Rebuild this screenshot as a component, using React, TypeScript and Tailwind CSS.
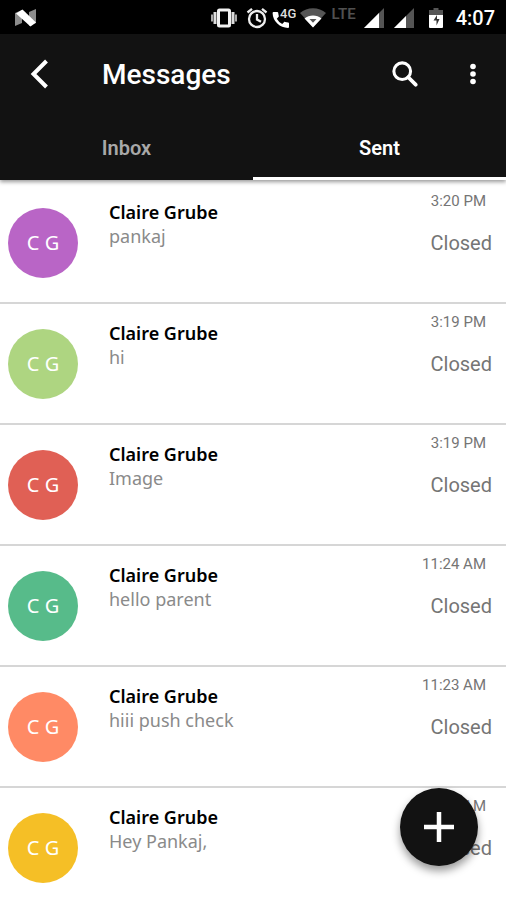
import React, { useState } from 'react';

const messages = [
  { id: 1, name: 'Claire Grube', initials: 'C G', text: 'pankaj', time: '3:20 PM', status: 'Closed', color: 'bg-[#b965c6]' },
  { id: 2, name: 'Claire Grube', initials: 'C G', text: 'hi', time: '3:19 PM', status: 'Closed', color: 'bg-[#aed581]' },
  { id: 3, name: 'Claire Grube', initials: 'C G', text: 'Image', time: '3:19 PM', status: 'Closed', color: 'bg-[#e06055]' },
  { id: 4, name: 'Claire Grube', initials: 'C G', text: 'hello parent', time: '11:24 AM', status: 'Closed', color: 'bg-[#57bb8a]' },
  { id: 5, name: 'Claire Grube', initials: 'C G', text: 'hiii push check', time: '11:23 AM', status: 'Closed', color: 'bg-[#ff8a65]' },
  { id: 6, name: 'Claire Grube', initials: 'C G', text: 'Hey Pankaj,', time: '11:22 AM', status: 'Closed', color: 'bg-[#f5bf26]' },
];

const tabs = ['Inbox', 'Sent'];

const StatusBar: React.FC = () => (
  <div className="flex h-[34px] shrink-0 items-center bg-black pl-[15px] pr-[11px] pt-px text-white">
    <svg width="22" height="18" viewBox="0 0 22 18" className="mr-auto" aria-hidden="true">
      <path d="M0 4l7-3v13l-7 3zM14 3l7-3v14l-7 3z" fill="#8c8c8c" />
      <path d="M1 4.500L7.500 .5 21 13.500l-5.500 4z" fill="#fff" />
    </svg>

    {/* Vibrate */}
    <svg width="28" height="22" viewBox="0 0 28 22" className="mr-2" aria-hidden="true">
      <rect x="8.500" y="3" width="11" height="16" rx="1" fill="none" stroke="#f2f2f2" strokeWidth="3" />
      <path d="M5 5v12M23 5v12" stroke="#ddd" strokeWidth="3" />
      <path d="M2 7.500v7M26 7.500v7" stroke="#aaa" strokeWidth="2" />
    </svg>
    {/* Alarm */}
    <svg width="22" height="22" viewBox="0 0 22 22" className="mr-1" fill="none" stroke="#eee" aria-hidden="true">
      <circle cx="11" cy="12" r="8" strokeWidth="2.300" />
      <path d="M1.500 5.500L6 1.800M20.500 5.500L16 1.800M11 7v5.500l4 2.300" strokeWidth="2.300" />
    </svg>
    {/* Call over 4G */}
    <svg width="24" height="22" viewBox="0 0 24 22" className="mr-1" aria-hidden="true">
      <path d="M1.500 5h3.800c.5 0 .8.300.9.800.1 1.100.3 2.100.6 3.100.1.300 0 .7-.2.900l-1.800 2a12 12 0 0 0 5.400 5.200l2-1.900c.2-.2.600-.3.900-.2 1 .3 2 .5 3 .5.600 0 .9.400.9.900v3.700c0 .5-.4.900-.9.900A15.500 15.500 0 0 1 .6 5.900c0-.5.4-.9.9-.9z" fill="#fff" />
      <text x="8" y="11" fill="#ddd" fontFamily="Roboto, sans-serif" fontSize="13" fontWeight="500">4G</text>
    </svg>
    {/* Wifi */}
    <svg width="26" height="20" viewBox="0 0 26 20" className="mr-1.5" aria-hidden="true">
      <path d="M13 19L0 5C7-1.500 19-1.500 26 5z" fill="#555" />
      <path d="M13 19.500L4.500 10.500C9 6.500 17 6.500 21.500 10.500z" fill="#fff" />
      <path d="M9.500 11h7L13 14.800z" fill="#555" />
    </svg>
    <span className="mr-2 h-6 font-[Roboto,sans-serif] text-[15px] leading-4 font-semibold text-[#505050]">LTE</span>
    {/* Signal strength of both SIMs */}
    <svg width="20" height="20" viewBox="0 0 20 20" className="mr-[10px]" aria-hidden="true">
      <path d="M0 20L20 0v20z" fill="#555" />
      <path d="M0 20L15 5v15z" fill="#fff" />
    </svg>
    <svg width="20" height="20" viewBox="0 0 20 20" className="mr-[15px]" aria-hidden="true">
      <path d="M0 20L20 0v20z" fill="#555" />
      <path d="M0 20L12 8v12z" fill="#fff" />
    </svg>
    {/* Battery */}
    <svg width="14" height="22" viewBox="0 0 14 22" className="mr-[13px]" aria-hidden="true">
      <path d="M4.500 1h5v2H14v5H0V3h4.500z" fill="#555" />
      <path d="M0 8h14v12a1 1 0 0 1-1 1H1a1 1 0 0 1-1-1z" fill="#fff" />
      <path d="M8 8L4.500 13.500h3v5l3-6.500H8z" fill="#333" />
    </svg>
    <span className="font-[Roboto,sans-serif] text-xl leading-6 font-medium">4:07</span>
  </div>
);

const App: React.FC = () => {
  const [active, setActive] = useState('Sent');

  return (
    <div className="flex h-screen flex-col overflow-hidden bg-white">
      <StatusBar />

      <header className="relative z-10 shrink-0 bg-[#121212] font-[Roboto,sans-serif] text-white shadow-[0_2px_4px_rgba(0,0,0,0.4)]">
        <div className="flex h-20 items-center pr-[17px] pl-[26px]">
          <button type="button" aria-label="Back" className="flex h-10 w-8 items-center">
            <svg width="26" height="30" viewBox="0 0 26 30" fill="none" stroke="currentColor" strokeWidth="4" aria-hidden="true">
              <path d="M20.500 2L7.500 15l13 13" />
            </svg>
          </button>
          <h1 className="ml-11 flex-1 pt-[2px] text-[28px] leading-8 font-medium">Messages</h1>
          <button type="button" aria-label="Search" className="flex h-10 w-10 items-center justify-center">
            <svg width="26" height="26" viewBox="0 0 28 28" fill="none" stroke="currentColor" aria-hidden="true">
              <circle cx="11" cy="11" r="9" strokeWidth="3.300" />
              <path d="M17.500 17.500l8 8" strokeWidth="4" strokeLinecap="round" />
            </svg>
          </button>
          <button type="button" aria-label="More options" className="ml-8 flex h-10 w-8 items-center justify-center">
            <svg width="6" height="22" viewBox="0 0 6 22" fill="currentColor" aria-hidden="true">
              <circle cx="3" cy="3.500" r="2.800" />
              <circle cx="3" cy="11" r="2.800" />
              <circle cx="3" cy="18.500" r="2.800" />
            </svg>
          </button>
        </div>

        <div role="tablist" className="grid grid-cols-2">
          {tabs.map(tab => (
            <button
              key={tab}
              type="button"
              role="tab"
              aria-selected={active === tab}
              onClick={() => setActive(tab)}
              className={`h-[66px] border-b-[3px] pt-1 text-xl font-semibold ${
                active === tab ? 'border-white text-white' : 'border-[#121212] text-[#a8a8a8]'
              }`}
            >
              {tab}
            </button>
          ))}
        </div>
      </header>

      <ul className="min-h-0 flex-1 overflow-y-auto pt-[3px] font-['Noto_Sans',sans-serif] [scrollbar-width:none]">
        {messages.map(m => (
          <li key={m.id} className="flex h-[121px] border-b-2 border-[#d6d6d6] pl-2">
            <div className={`mt-[25px] flex h-[70px] w-[70px] shrink-0 items-center justify-center rounded-full text-xl text-white ${m.color}`}>
              {m.initials}
            </div>
            <div className="ml-[31px] min-w-0 flex-1 pt-[17px] text-lg leading-6">
              <p className="truncate font-semibold text-black">{m.name}</p>
              <p className="truncate text-[#8a8a8a]">{m.text}</p>
            </div>
            <div className="flex shrink-0 flex-col items-end pt-[10px] pr-[14px] font-[Roboto,sans-serif] text-[#757575]">
              <span className="mr-[6px] text-[15px] leading-4">{m.time}</span>
              <span className="mt-[22px] text-xl leading-6">{m.status}</span>
            </div>
          </li>
        ))}
      </ul>

      <button
        type="button"
        aria-label="New message"
        className="fixed right-7 bottom-[34px] z-20 flex h-[78px] w-[78px] items-center justify-center rounded-full bg-[#121212] text-white shadow-[0_5px_9px_rgba(0,0,0,0.4)]"
      >
        <svg width="30" height="30" viewBox="0 0 30 30" stroke="currentColor" strokeWidth="4.500" aria-hidden="true">
          <path d="M15 0v30M0 15h30" />
        </svg>
      </button>
    </div>
  );
};

export default App;
